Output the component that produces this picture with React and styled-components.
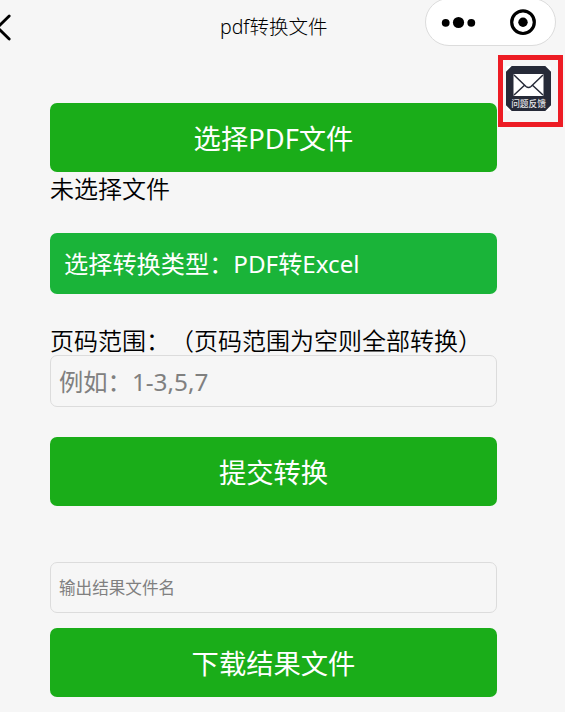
import styled, { createGlobalStyle } from 'styled-components';

const GlobalStyle = createGlobalStyle`
	* {
		box-sizing: border-box;
	}

	body {
		margin: 0;
		background: #f6f6f6;
		font-family: 'Noto Sans', 'Noto Sans CJK SC', sans-serif;
		text-spacing-trim: space-all;
	}
`;

const Page = styled.div`
	position: relative;
	height: 712px;
	overflow: hidden;
	color: #000;
`;

const Header = styled.header`
	display: flex;
	height: 103px;
	align-items: flex-start;
`;

const BackButton = styled.button`
	width: 220px;
	height: 54px;
	padding: 0;
	border: 0;
	background: none;
	text-align: left;

	svg {
		display: block;
	}
`;

const Title = styled.h1`
	flex: 1;
	margin: 0;
	font-size: 19.5px;
	font-weight: 300;
	line-height: 53px;
	white-space: nowrap;
`;

const Capsule = styled.div`
	width: 131px;
	height: 48px;
	margin: -2px 9px 0 0;
	border: 1px solid #dcdcdc;
	border-radius: 24px;
	background: #fff;

	svg {
		display: block;
	}
`;

const Feedback = styled.div`
	position: absolute;
	top: 55px;
	left: 498px;
	width: 65px;
	height: 72px;
	padding: 6px 3px;
	border: 5px solid #ed1c24;
`;

const FeedbackIcon = styled.div`
	display: flex;
	flex-direction: column;
	align-items: center;
	width: 45px;
	height: 45px;
	padding-top: 7px;
	background:
		linear-gradient(135deg, #fff 3.5px, transparent 4.5px),
		linear-gradient(225deg, #fff 3.5px, transparent 4.5px),
		linear-gradient(315deg, #fff 3.5px, transparent 4.5px),
		linear-gradient(45deg, #fff 3.5px, transparent 4.5px),
		#262a38;
	border-radius: 2px;
	color: #e4e5e8;
	font-size: 8.7px;
	font-weight: 500;
	line-height: 12px;
	white-space: nowrap;

	svg {
		display: block;
		flex: none;
		margin-bottom: 1px;
	}
`;

const Form = styled.main`
	display: flex;
	flex-direction: column;
	width: 447px;
	margin-left: 50px;
`;

const Button = styled.button`
	height: 69px;
	margin: ${(props) => props.$margin || 0};
	padding: 2px 0 0;
	border: 0;
	border-radius: 7px;
	background: #1aad19;
	color: #fff;
	font-family: inherit;
	font-size: 27.3px;
	line-height: 67px;
`;

const TypePicker = styled.div`
	height: 61px;
	margin-bottom: 30px;
	padding-left: 14px;
	border-radius: 7px;
	background: #1ab439;
	color: #fff;
	font-size: 24.2px;
	line-height: 62px;
`;

const Text = styled.div`
	height: ${(props) => props.$height}px;
	font-size: 24px;
	font-weight: 350;
	line-height: ${(props) => props.$line}px;
	white-space: nowrap;
`;

const Input = styled.input`
	height: ${(props) => props.$height}px;
	padding: 0 8px;
	border: 1px solid #dcdcdc;
	border-radius: 7px;
	background: transparent;
	font-family: inherit;
	font-size: ${(props) => props.$size}px;

	&::placeholder {
		color: #808080;
		opacity: 1;
	}
`;

const App = () => {
	return (
		<>
			<GlobalStyle />
			<Page>
				<Header>
					<BackButton aria-label='返回'>
						<svg width='20' height='54' fill='none'>
							<path
								d='M9.2 16 L-2.5 27.5 L9.2 39'
								stroke='#000'
								strokeWidth='2.8'
								strokeLinecap='round'
							/>
						</svg>
					</BackButton>
					<Title>pdf转换文件</Title>
					<Capsule>
						<svg width='129' height='46'>
							<circle cx='19.7' cy='23.8' r='3.9' />
							<circle cx='32.5' cy='23.5' r='5.6' />
							<circle cx='45.3' cy='23.8' r='3.9' />
							<circle
								cx='97'
								cy='23.2'
								r='11.3'
								fill='none'
								stroke='#000'
								strokeWidth='3.2'
							/>
							<circle cx='97' cy='23.2' r='4.7' />
						</svg>
					</Capsule>
				</Header>

				<Feedback>
					<FeedbackIcon>
						<svg width='31' height='24' fill='none'>
							<rect x='.5' y='1' width='30' height='22' rx='1' fill='#fff' />
							<path
								d='M1 2 L13 13.5 Q15.5 15.5 18 13.5 L30 2 M1 22 L11.5 12.3 M30 22 L19.5 12.3'
								stroke='#262a38'
								strokeWidth='1.5'
							/>
						</svg>
						问题反馈
					</FeedbackIcon>
				</Feedback>

				<Form>
					<Button>选择PDF文件</Button>
					<Text $height={61} $line={34}>
						未选择文件
					</Text>
					<TypePicker>选择转换类型：PDF转Excel</TypePicker>
					<Text $height={31} $line={34}>
						页码范围：（页码范围为空则全部转换）
					</Text>
					<Input $height={52} $size={24.3} placeholder='例如：1-3,5,7' />
					<Button $margin='30px 0 56px'>提交转换</Button>
					<Input $height={51} $size={16.6} placeholder='输出结果文件名' />
					<Button $margin='15px 0 0'>下载结果文件</Button>
				</Form>
			</Page>
		</>
	);
};

export default App;
